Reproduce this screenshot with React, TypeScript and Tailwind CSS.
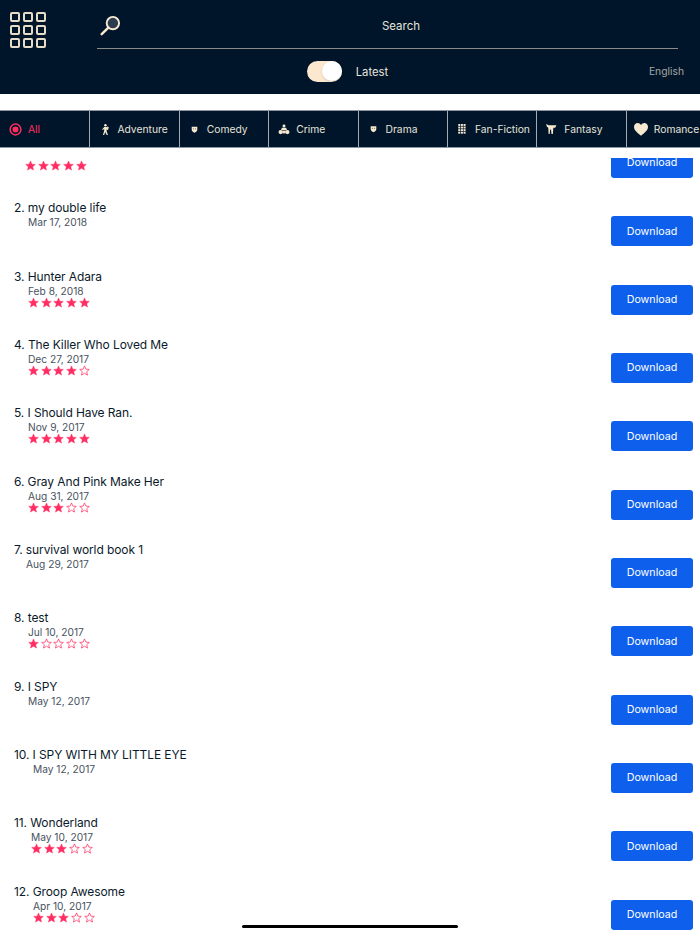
import React from 'react';

interface Book {
  title: string;
  date: string;
  rating: number;
  indent: string;
}

const books: Book[] = [
  { title: '1.', date: '', rating: 5, indent: 'pl-[11px]' },
  { title: '2. my double life', date: 'Mar 17, 2018', rating: 0, indent: 'pl-[14px]' },
  { title: '3. Hunter Adara', date: 'Feb 8, 2018', rating: 5, indent: 'pl-[14px]' },
  { title: '4. The Killer Who Loved Me', date: 'Dec 27, 2017', rating: 4, indent: 'pl-[14px]' },
  { title: '5. I Should Have Ran.', date: 'Nov 9, 2017', rating: 5, indent: 'pl-[14px]' },
  { title: '6. Gray And Pink Make Her', date: 'Aug 31, 2017', rating: 3, indent: 'pl-[14px]' },
  { title: '7. survival world book 1', date: 'Aug 29, 2017', rating: 0, indent: 'pl-[12px]' },
  { title: '8. test', date: 'Jul 10, 2017', rating: 1, indent: 'pl-[14px]' },
  { title: '9. I SPY', date: 'May 12, 2017', rating: 0, indent: 'pl-[14px]' },
  { title: '10. I SPY WITH MY LITTLE EYE', date: 'May 12, 2017', rating: 0, indent: 'pl-[19px]' },
  { title: '11. Wonderland', date: 'May 10, 2017', rating: 3, indent: 'pl-[17px]' },
  { title: '12. Groop Awesome', date: 'Apr 10, 2017', rating: 3, indent: 'pl-[19px]' },
];

const Star = ({ filled }: { filled: boolean }) => (
  <svg viewBox="0 0 24 24" className="w-[11px] h-[11px]" fill={filled ? '#ff2d62' : 'none'} stroke="#ff2d62" strokeWidth={filled ? 1 : 1.6}>
    <path d="M12 2l3 7 7.500.6-5.700 4.900 1.800 7.500L12 18l-6.600 4 1.800-7.500L1.500 9.600 9 9z" />
  </svg>
);

const iconColor = '#f7e8d0';

// little theatre mask, used by Comedy and Drama
const Mask = ({ className }: { className: string }) => (
  <svg viewBox="0 0 10 10" className={className}>
    <path d="M1 1h8v4c0 2.500-2 4-4 4.500C3 9 1 7.500 1 5z" fill={iconColor} />
    <circle cx="3.500" cy="4" r=".9" fill="#7d7668" />
    <circle cx="6.500" cy="4" r=".9" fill="#7d7668" />
  </svg>
);

const tabIcons: Record<string, React.ReactNode> = {
  All: (
    <svg viewBox="0 0 14 14" className="w-[13px] h-[13px]">
      <circle cx="7" cy="7" r="5.800" fill="none" stroke="#ff2d62" strokeWidth="1.600" />
      <circle cx="7" cy="7" r="3.200" fill="#ff2d62" />
    </svg>
  ),
  Adventure: (
    <svg viewBox="0 0 12 14" className="w-[10px] h-[13px]" fill={iconColor}>
      <circle cx="6.500" cy="1.800" r="1.500" />
      <path d="M5 4h3l1.600 3-1 .5L8 6.500V9l1.500 4.500H8L6.300 10 5 13.500H3.500L5 8.500V6L3.500 7.500 2.500 7z" />
      <path d="M8.500 3.500l2 .5-.8 3.500-1.200-.5z" />
    </svg>
  ),
  Comedy: <Mask className="w-[7px] h-[7px]" />,
  Crime: (
    <svg viewBox="0 0 14 12" className="w-[12px] h-[11px]" fill={iconColor}>
      <circle cx="7" cy="2" r="1.700" />
      <path d="M4.500 4h5l1 3h-7z" />
      <circle cx="3" cy="9" r="2.400" />
      <circle cx="11" cy="9" r="2.400" />
      <rect x="5" y="7.500" width="4" height="3" />
    </svg>
  ),
  Drama: <Mask className="w-[7px] h-[8px]" />,
  'Fan-Fiction': (
    <svg viewBox="0 0 9 12" className="w-[8px] h-[10px]" fill={iconColor}>
      {[0, 1, 2, 3].flatMap((r) =>
        [0, 1, 2].map((c) => <rect key={`${r}-${c}`} x={c * 3.200} y={r * 3.100} width="2.400" height="2.300" />)
      )}
    </svg>
  ),
  Fantasy: (
    <svg viewBox="0 0 12 11" className="w-[11px] h-[10px]" fill={iconColor}>
      <path d="M0 0l3 1.500h8.500L10 4H8L7.500 11H6L5.500 6H4.500L4 11H2.800L2.500 4 1 3z" />
    </svg>
  ),
  Romance: (
    <svg viewBox="0 0 24 22" className="w-[14px] h-[13px]" fill={iconColor}>
      <path d="M12 21.500C5 16 0 11.500 0 6.500 0 3 2.700 0 6.200 0 8.600 0 10.800 1.300 12 3.400 13.200 1.300 15.400 0 17.800 0 21.300 0 24 3 24 6.500c0 5-5 9.500-12 15z" />
    </svg>
  ),
};

const tabs = ['All', 'Adventure', 'Comedy', 'Crime', 'Drama', 'Fan-Fiction', 'Fantasy', 'Romance'];

const App: React.FC = () => {
  return (
    <div
      className="relative w-[700px] h-[934px] overflow-hidden bg-white text-[#0b1a2b]"
      style={{ fontFamily: 'Inter, "Liberation Sans", sans-serif' }}
    >
      {/* top bar */}
      <header className="h-[94px] bg-[#001529] flex">
        <div className="w-[97px] shrink-0 pl-[10px] pt-[12px]">
          <div className="grid grid-cols-3 gap-[3px] w-[36px]">
            {Array.from({ length: 9 }).map((_, i) => (
              <span key={i} className="w-[10px] h-[10px] rounded-[2px] border-2 border-[#e6dcc8]" />
            ))}
          </div>
        </div>
        <div className="flex-1 flex flex-col pr-[22px]">
          <div className="h-[49px] border-b border-[#8a8c88] relative flex items-center justify-center pl-[27px] pt-[5px]">
            <svg viewBox="0 0 22 22" className="absolute left-[3px] top-[15px] w-[21px] h-[21px]">
              <circle cx="13.500" cy="8.500" r="6.500" fill="#2c3c4f" stroke="#f7e8d0" strokeWidth="2" />
              <path d="M8.500 13.500L1.800 20" stroke="#f7e8d0" strokeWidth="2.600" strokeLinecap="round" />
            </svg>
            <span className="text-[11.500px] text-[#e6e4dc]">Search</span>
          </div>
          <div className="flex-1 relative flex items-center justify-center">
            <div className="flex items-center gap-[14px] mr-[80px]">
              <div className="w-[35px] h-[21px] rounded-full bg-[#fbe8cf] relative">
                <span className="absolute right-0 top-0 w-[20px] h-[20px] rounded-full bg-white shadow" />
              </div>
              <span className="text-[11.300px] text-[#e6e4dc] pt-[2px]">Latest</span>
            </div>
            <span className="absolute right-[-6px] top-[15px] text-[10.300px] text-[#a6a7a5]">English</span>
          </div>
        </div>
      </header>

      <div className="h-[16px]" />

      {/* category tabs */}
      <nav className="h-[38px] bg-[#001529] flex border-y border-[#8c96a0]">
        {tabs.map((tab, i) => (
          <div
            key={tab}
            className={`w-[89.400px] shrink-0 flex items-center ${i > 0 ? 'border-l border-[#a4abb0]' : 'pl-[1px]'}`}
          >
            <span className="w-[27px] pl-[2px] shrink-0 flex items-center justify-center">{tabIcons[tab]}</span>
            <span className={`text-[10.300px] pt-[1px] whitespace-nowrap ${tab === 'All' ? 'text-[#ff2d62]' : 'text-[#e6e4dc]'}`}>{tab}</span>
          </div>
        ))}
      </nav>

      <div className="h-[10px]" />

      {/* list, scrolled so the first row is cut off */}
      <div className="h-[776px] overflow-hidden">
        <div className="mt-[-31px]">
          {books.map((book) => (
            <div key={book.title} className="h-[68.330px] flex justify-between pl-[14px] pr-[7px]">
              <div className="pt-[5px]">
                <div className="text-[12px] leading-[16px] tracking-[-0.1px] whitespace-nowrap">{book.title}</div>
                <div className={`${book.indent} h-[12px] text-[10.200px] leading-[12px] text-[#47525e]`}>{book.date}</div>
                {book.rating > 0 && (
                  <div className={`${book.indent} flex gap-[1.670px]`}>
                    {[1, 2, 3, 4, 5].map((n) => (
                      <Star key={n} filled={n <= book.rating} />
                    ))}
                  </div>
                )}
              </div>
              <button className="mt-[21px] w-[82px] h-[30px] pt-[1px] rounded-[3px] bg-[#0d5fec] text-white text-[10.700px]">Download</button>
            </div>
          ))}
        </div>
      </div>

      {/* home indicator */}
      <div className="absolute left-[242px] bottom-[6px] w-[216px] h-[3px] rounded-full bg-black" />
    </div>
  );
};

export default App;
